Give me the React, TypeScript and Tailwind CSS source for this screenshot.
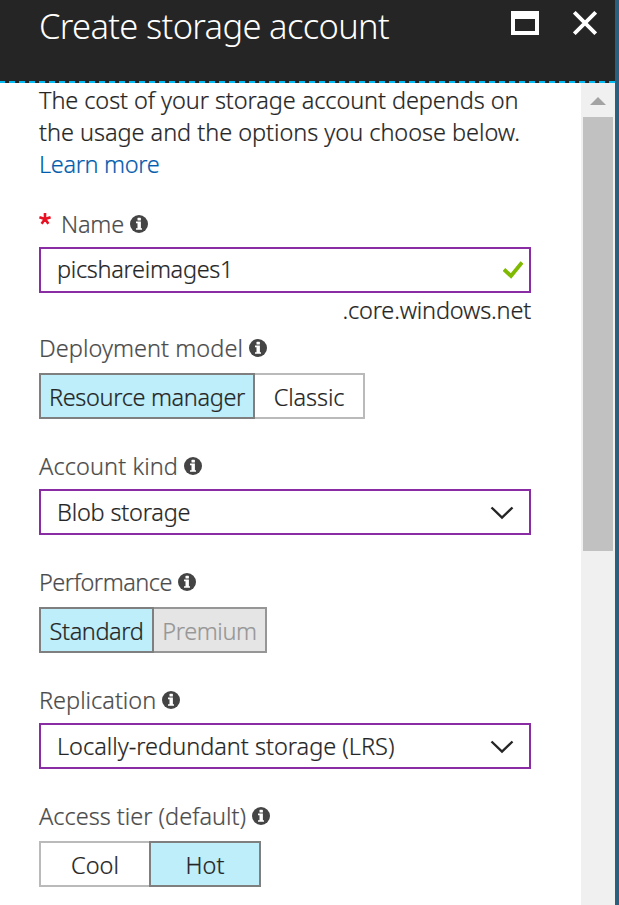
import type { ReactNode } from "react";

function InfoIcon() {
  return (
    <svg className="size-[18px] shrink-0" viewBox="0 0 18 18">
      <circle cx="9" cy="9" r="9" fill="#444" />
      <rect x="7.5" y="2.8" width="3.4" height="2.8" rx="0.6" fill="#fff" />
      <path d="M6 6.6h4.9v6.6H12v1.6H6v-1.6h1.5v-5H6z" fill="#fff" />
    </svg>
  );
}

function Label({ text, tracking = "", required = false }: { text: string; tracking?: string; required?: boolean }) {
  return (
    <div className="flex h-8 items-center text-[#4b4b4b]">
      {required && (
        <svg className="mr-[10px] mb-[10px] size-3" viewBox="0 0 12 12" fill="none" stroke="#e81123" strokeWidth="2.6">
          <path d="M6 6V0M6 6L.4 4.2M6 6l5.6-1.8M6 6l3.4 4.7M6 6l-3.4 4.7" />
        </svg>
      )}
      <span className={tracking}>{text}</span>
      <span className="ml-[6px]">
        <InfoIcon />
      </span>
    </div>
  );
}

function Field({ children }: { children: ReactNode }) {
  return (
    <div className="mt-[7px] flex h-[46px] w-[492px] items-center justify-between border-2 border-[#8a2da5] pl-4">
      {children}
    </div>
  );
}

function Chevron() {
  return (
    <svg className="mt-px mr-[15px] h-[14px] w-6" viewBox="0 0 24 14" fill="none" stroke="#252525" strokeWidth="2.4">
      <path d="M1.5 1.5L12 11.5L22.5 1.5" />
    </svg>
  );
}

export default function App() {
  return (
    <div className="flex h-[905px] w-[619px] overflow-hidden bg-[#2b5f7e] font-['Noto_Sans','Open_Sans',sans-serif] text-[23.5px] leading-8 font-light whitespace-nowrap text-[#252525] [-webkit-text-stroke:0.2px]">
      <div className="flex w-[615px] flex-col bg-white">
        <header className="flex h-[81px] shrink-0 bg-[#252525]">
          <h1 className="ml-[39px] h-[52px] w-[472px] text-[34.5px] leading-[52px] font-light tracking-[-0.66px] text-white [-webkit-text-stroke:0px]">
            Create storage account
          </h1>
          <div className="mt-[11px] h-6 w-7 border-4 border-t-8 border-white" />
          <svg className="mt-[11px] ml-[34px] size-6" viewBox="0 0 24 24" fill="none" stroke="#fff" strokeWidth="3.8">
            <path d="M1.3 1.3L22.7 22.7M22.7 1.3L1.3 22.7" />
          </svg>
        </header>
        <div className="h-[2px] shrink-0 bg-[#252525] bg-[repeating-linear-gradient(90deg,#00bcf2_0_5px,#252525_5px_9px,#00bcf2_9px_10px)]" />
        <div className="flex min-h-0 flex-1">
          <main className="w-[581px] pt-px pl-[39px]">
            <p className="tracking-[-0.08px]">The cost of your storage account depends on</p>
            <p className="tracking-[-0.03px]">the usage and the options you choose below.</p>
            <p className="tracking-[-0.34px] text-[#015cad]">Learn more</p>

            <section className="mt-7">
              <Label text="Name" tracking="tracking-[-0.2px]" required />
              <Field>
                <span className="-mt-0.5 tracking-[-0.3px]">picshareimages1</span>
                <svg className="mr-[6px] h-[18px] w-5" viewBox="0 0 20 18" fill="none" stroke="#7fba00" strokeWidth="3.8">
                  <path d="M1 8.5L8 15L19 1.5" />
                </svg>
              </Field>
              <p className="mt-px w-[492px] text-right tracking-[-0.18px]">.core.windows.net</p>
            </section>

            <section className="mt-[6px]">
              <Label text="Deployment model" tracking="tracking-[0.05px]" />
              <div className="mt-[9px] flex h-[46px]">
                <div className="flex w-[216px] items-center justify-center border-2 border-[#7f7f7f] bg-[#bdeefa] pt-0.5 tracking-[-0.34px]">
                  Resource manager
                </div>
                <div className="flex w-[110px] items-center justify-center border-2 border-l-0 border-[#bababa] pt-0.5 tracking-[-0.1px]">
                  Classic
                </div>
              </div>
            </section>

            <section className="mt-[31px]">
              <Label text="Account kind" tracking="tracking-[0.1px]" />
              <Field>
                <span className="tracking-[-0.2px]">Blob storage</span>
                <Chevron />
              </Field>
            </section>

            <section className="mt-[31px]">
              <Label text="Performance" tracking="tracking-[-0.47px]" />
              <div className="mt-[9px] flex h-[46px]">
                <div className="flex w-[115px] items-center justify-center border-2 border-[#7f7f7f] bg-[#bdeefa] pt-0.5 tracking-[-0.4px]">
                  Standard
                </div>
                <div className="flex w-[113px] items-center justify-center border-2 border-l-0 border-[#969696] bg-[#e5e5e5] pt-0.5 tracking-[-0.39px] text-[#969696]">
                  Premium
                </div>
              </div>
            </section>

            <section className="mt-[31px]">
              <Label text="Replication" />
              <Field>
                Locally-redundant storage (LRS)
                <Chevron />
              </Field>
            </section>

            <section className="mt-[31px]">
              <Label text="Access tier (default)" />
              <div className="mt-[9px] flex h-[46px]">
                <div className="flex w-[110px] items-center justify-center border-2 border-r-0 border-[#bababa] pt-0.5">Cool</div>
                <div className="flex w-[112px] items-center justify-center border-2 border-[#7f7f7f] bg-[#bdeefa] pt-0.5">Hot</div>
              </div>
            </section>
          </main>
          <aside className="flex w-[34px] flex-col items-center bg-[#f0f0f0]">
            <svg className="mt-[14px] h-2 w-4" viewBox="0 0 16 8">
              <path d="M8 0L16 8H0z" fill="#a3a3a3" />
            </svg>
            <div className="mt-3 h-[434px] w-[30px] bg-[#c1c1c1]" />
          </aside>
        </div>
      </div>
    </div>
  );
}
